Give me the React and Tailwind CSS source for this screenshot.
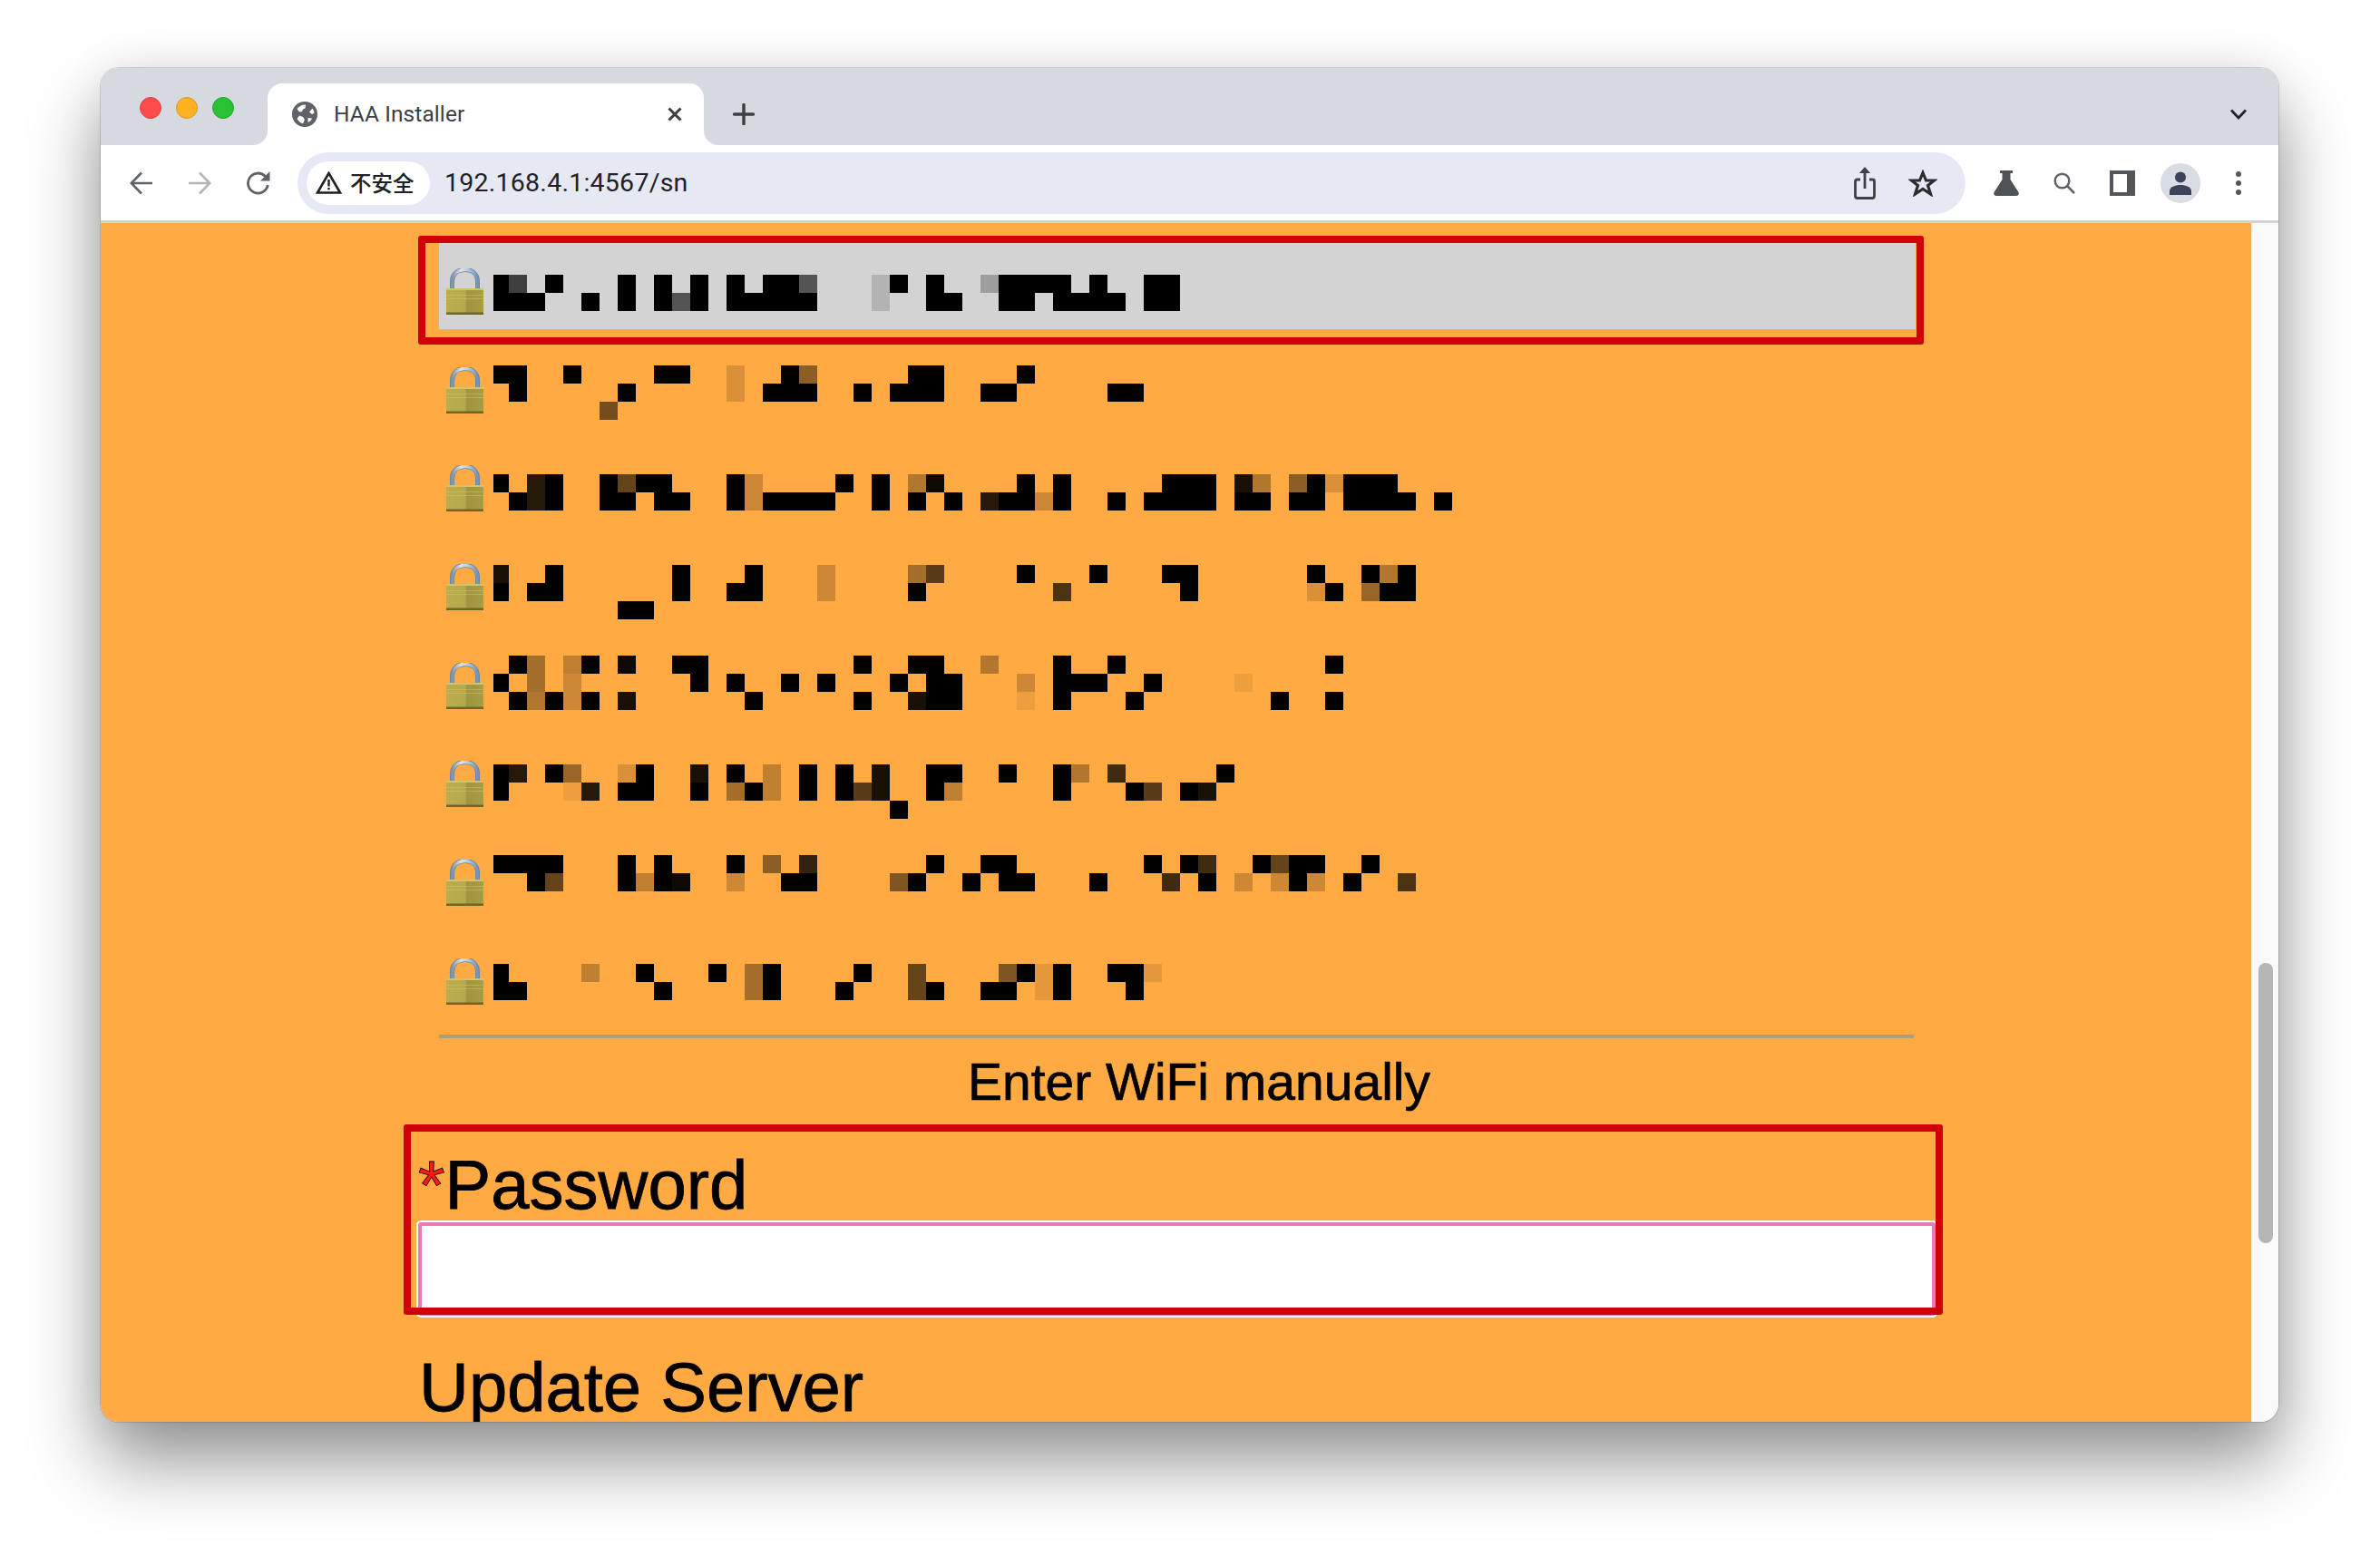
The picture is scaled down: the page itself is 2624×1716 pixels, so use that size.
const ROWS = [
    { top: 303, lines: ['0 1:.7 3 7 9 11 13 15 16 17:.6 21:.15 22 24 27:.25 28 29 30 31 33 36 37', '0 1 2 5 7 9 10:.6 11 13 14 15 16 17 21:.15 24 25 28 29 31 32 33 34 36 37'] },
    { top: 403, lines: ['0 1 4 9 10 13:.15 16 17:.45 23 24 29', '1 7 13:.15 15 16 17 20 22 23 24 27 28 34 35', '6:.55'] },
    { top: 523, lines: ['0 2:.85 3 6 7:.6 8 9 13 14:.2 19 21 23:.3 24:.95 29 31 37 38 39 41:.9 42:.3 44:.45 45 46:.15 47 48 49', '1 2:.85 3 6 7 9 10 13 14:.2 15 16 17 18 21 23 25 27:.85 28 29 30:.2 31 34 36 37 38 39 41 42 44 45 47 48 49 50 52'] },
    { top: 623, lines: ['0:.9 3 10 14 18:.2 23:.35 24:.65 29 33 37 38 45 48 49:.3 50', '0 2 3 10 13 14 18:.2 23 31:.7 38 45:.15 46 48:.4 49 50', '7 8'] },
    { top: 723, lines: ['1 2:.35 4:.25 5 7:.95 10 11 20 23 24 27:.3 31 34 46', '0 2:.35 4:.2 11 13 16 18 22 24 25 29:.2 31 32 33 36 41:.07', '1 2:.3 3 4:.2 5 7:.9 14 20 23:.9 24 25 29:.07 31 35 43 46'] },
    { top: 843, lines: ['0 1:.85 3 4:.4 7:.15 8 11:.9 13 15:.25 17 19 21:.9 24 25 28 31 32:.3 34:.75 40', '0 4:.07 5:.85 7 8 11 13:.35 14 15:.25 17 19 20:.65 21:.9 24 25:.25 31 35 36:.65 38 39:.9', '22'] },
    { top: 943, lines: ['0 1 2 3 7 9 13 15:.45 17:.8 24 27 28 36 38 39:.75 42 43:.6 44 45 48', '2 3:.6 7 8:.25 9 10:.95 13:.2 16 17 22:.5 23 26 28 29 33 37:.75 39 41:.2 43:.2 44 45:.2 47 50:.7'] },
    { top: 1063, lines: ['0 5:.25 8 12 14:.35 15 20 23:.6 28:.5 29 30:.1 31 34 35 36:.1', '0 1 9 14:.35 15 19 23:.6 24 27 28 30:.1 31 35'] },
];

// the blurred network names, one block = 20px
function Mosaic({ top, lines, rowTop }) {
    const offset = top - Math.round(rowTop);
    return (
        <svg width="1080" height="95" className="ml-[11px] shrink-0" shapeRendering="crispEdges">
            {lines.map((line, i) => line.split(' ').map(token => {
                const [col, alpha] = token.split(':');
                const x = Math.max(0, Number(col) * 20 - 3);
                const w = Number(col) === 0 ? 17 : 20;
                return <rect key={`${i}-${col}`} x={x} y={offset + i * 20} width={w} height="20" fill="#000" fillOpacity={alpha ? Number(alpha) : 1} />;
            }))}
        </svg>
    );
}

function Lock({ id }) {
    return (
        <svg width="41" height="51" viewBox="0 0 41 51" className="ml-[8px] mt-[28px] shrink-0">
            <defs>
                <linearGradient id={`body${id}`} x1="0" y1="0" x2="1" y2="0">
                    <stop offset="0" stopColor="#b9ad4f" />
                    <stop offset="0.5" stopColor="#b5a94c" />
                    <stop offset="0.56" stopColor="#9f9440" />
                    <stop offset="1" stopColor="#a89c44" />
                </linearGradient>
                <linearGradient id={`shackle${id}`} x1="0" y1="0" x2="1" y2="0">
                    <stop offset="0" stopColor="#7f93ab" />
                    <stop offset="0.35" stopColor="#dfe6ee" />
                    <stop offset="0.7" stopColor="#a9c0da" />
                    <stop offset="1" stopColor="#6f93bd" />
                </linearGradient>
            </defs>
            <path d="M6.500 23V14.500C6.500 6 12.500 1.500 20.500 1.500S34.500 6 34.500 14.500V23" fill="none" stroke="#6c7f94" strokeWidth="5" />
            <path d="M6.500 23V14.500C6.500 6 12.500 1.500 20.500 1.500S34.500 6 34.500 14.500V23" fill="none" stroke={`url(#shackle${id})`} strokeWidth="3.500" />
            <rect x="0" y="22" width="41" height="29" rx="1.500" fill={`url(#body${id})`} />
            <rect x="0" y="22" width="41" height="2" fill="#cfc56c" />
            <rect x="0" y="29" width="41" height="1" fill="#cfc56c" fillOpacity="0.5" />
            <rect x="0" y="33" width="41" height="1" fill="#cfc56c" fillOpacity="0.5" />
            <rect x="0" y="48.500" width="41" height="2.500" fill="#6f6626" />
        </svg>
    );
}

function Globe() {
    return (
        <svg width="28" height="28" viewBox="0 0 28 28" className="shrink-0">
            <circle cx="14" cy="14" r="14" fill="#5f6368" />
            <path d="M15 3.500C11.500 3.200 7.500 5 5.500 8L8 11.500L11 11L12 8.500L14.500 7.500Z" fill="#fff" />
            <path d="M22.500 7.500L19 11.500L22 14L24.500 12.500C24.300 10.800 23.500 9 22.500 7.500Z" fill="#fff" />
            <path d="M8 15.500L12 17L14 20L12 24.200C9 23.500 6.800 21.500 5.500 19Z" fill="#fff" />
            <path d="M17.500 18L22 18.500C21 20.500 19.500 22 17.500 23Z" fill="#fff" />
        </svg>
    );
}

function Toolbar() {
    return (
        <div className="flex h-[86px] shrink-0 items-center border-b-[3px] border-[#d0d2d6] bg-white pl-[32px]">
            <svg width="26" height="26" viewBox="0 0 26 26" fill="none" stroke="#5f6368" strokeWidth="2.600" className="shrink-0">
                <path d="M25 13H2M13 1.500L1.800 13L13 24.500" />
            </svg>
            <svg width="26" height="26" viewBox="0 0 26 26" fill="none" stroke="#b3b5b8" strokeWidth="2.600" className="ml-[38px] shrink-0">
                <path d="M1 13H24M13 1.500L24.200 13L13 24.500" />
            </svg>
            <svg width="27" height="27" viewBox="0 0 27 27" className="ml-[38px] shrink-0">
                <path d="M21.500 6.500A11 11 0 1 0 24.300 16" fill="none" stroke="#5f6368" strokeWidth="2.800" />
                <path d="M26.500 1V11.500H16Z" fill="#5f6368" />
            </svg>

            <div className="ml-[30px] flex h-[68px] w-[1839px] shrink-0 items-center rounded-full bg-[#e6e9f4] pl-[10px] pr-[31px]">
                <div className="flex h-[48px] w-[136px] shrink-0 items-center rounded-full bg-white pl-[10px]">
                    <svg width="29" height="25" viewBox="0 0 29 25" className="shrink-0">
                        <path d="M14.500 2L27 23.500H2Z" fill="none" stroke="#202124" strokeWidth="2.600" strokeLinejoin="miter" />
                        <path d="M13.300 9H15.700V16.500H13.300ZM13.300 18H15.700V20.300H13.300Z" fill="#202124" />
                    </svg>
                    <span className="ml-[9px] font-['Noto_Sans_CJK_SC',sans-serif] text-[23.500px] font-medium leading-none text-[#202124]">不安全</span>
                </div>
                <span className="ml-[16px] mt-[1px] font-['Roboto',sans-serif] text-[28.500px] leading-none tracking-[0.25px] text-[#202124]">192.168.4.1:4567/sn</span>

                <svg width="24" height="36" viewBox="0 0 24 36" fill="none" stroke="#3c4043" strokeWidth="2.800" className="ml-auto shrink-0">
                    <path d="M7 14H3.500A2 2 0 0 0 1.500 16V32A2.500 2.500 0 0 0 4 34.500H20A2.500 2.500 0 0 0 22.500 32V16A2 2 0 0 0 20.500 14H17" />
                    <path d="M12 24V3" />
                    <path d="M12 0L18 7H6Z" fill="#3c4043" stroke="none" />
                </svg>
                <svg width="32" height="30" viewBox="0 0 32 30" className="ml-[36px] shrink-0">
                    <path d="M16 3.500L19.500 12H28.500L21.500 17.500L24.500 27L16 21.500L7.500 27L10.500 17.500L3.500 12H12.500Z" fill="#e6e9f4" stroke="#2b2e31" strokeWidth="3.200" strokeLinejoin="miter" />
                </svg>
            </div>

            <svg width="28" height="28" viewBox="0 0 28 28" className="ml-[31px] shrink-0">
                <path d="M7 0H21V3H18.500V10L27.500 24C28.500 26 27 28 25 28H3C1 28 -.5 26 .5 24L9.500 10V3H7Z" fill="#4f5356" />
            </svg>
            <svg width="24" height="24" viewBox="0 0 24 24" fill="none" stroke="#5f6368" strokeWidth="2.500" className="ml-[38px] shrink-0">
                <circle cx="9.500" cy="9.500" r="7.800" />
                <path d="M15 15L23 23" />
            </svg>
            <div className="ml-[38px] flex h-[28px] w-[28px] shrink-0 border-[4px] border-r-[9px] border-[#53575a] bg-white" />
            <div className="ml-[28px] flex h-[44px] w-[44px] shrink-0 items-center justify-center rounded-full bg-[#d9dce3]">
                <svg width="24" height="26" viewBox="0 0 24 26">
                    <circle cx="12" cy="6.500" r="6" fill="#3c4257" />
                    <path d="M0 26V22C0 17 6 15 12 15S24 17 24 22V26Z" fill="#3c4257" />
                </svg>
            </div>
            <div className="ml-[39px] flex shrink-0 flex-col gap-[4px]">
                <div className="h-[6px] w-[6px] rounded-full bg-[#53575a]" />
                <div className="h-[6px] w-[6px] rounded-full bg-[#53575a]" />
                <div className="h-[6px] w-[6px] rounded-full bg-[#53575a]" />
            </div>
        </div>
    );
}

function TabStrip() {
    return (
        <div className="flex h-[85px] shrink-0 bg-[#d6d9e0] pl-[43px]">
            <div className="mt-[32px] flex h-[24px] shrink-0 gap-[16px]">
                <div className="h-[24px] w-[24px] rounded-full border border-[#e0413f] bg-[#ff4b4b]" />
                <div className="h-[24px] w-[24px] rounded-full border border-[#d99a1f] bg-[#ffb122]" />
                <div className="h-[24px] w-[24px] rounded-full border border-[#24a52c] bg-[#29c234]" />
            </div>
            <div className="relative ml-[37px] mt-[17px] flex h-[68px] w-[481px] shrink-0 items-center rounded-t-[16px] bg-white pl-[27px] pr-[24px]">
                <div className="absolute bottom-0 left-[-16px] h-[16px] w-[16px] bg-white">
                    <div className="h-full w-full rounded-br-[16px] bg-[#d6d9e0]" />
                </div>
                <div className="absolute bottom-0 right-[-16px] h-[16px] w-[16px] bg-white">
                    <div className="h-full w-full rounded-bl-[16px] bg-[#d6d9e0]" />
                </div>
                <Globe />
                <span className="ml-[18px] font-['Roboto',sans-serif] text-[24.500px] leading-none tracking-[0.1px] text-[#3c4043]">HAA Installer</span>
                <svg width="16" height="16" viewBox="0 0 16 16" fill="none" stroke="#3c4043" strokeWidth="3" className="ml-auto shrink-0">
                    <path d="M1.500 1.500L14.500 14.500M14.500 1.500L1.500 14.500" />
                </svg>
            </div>
            <svg width="24" height="24" viewBox="0 0 24 24" fill="none" stroke="#3c4043" strokeWidth="3.500" strokeLinecap="round" className="ml-[32px] mt-[39px] shrink-0">
                <path d="M12 1.500V22.500M1.500 12H22.500" />
            </svg>
            <svg width="18" height="12" viewBox="0 0 18 12" fill="none" stroke="#202124" strokeWidth="2.800" className="ml-auto mr-[35px] mt-[45px] shrink-0">
                <path d="M1 1.500L9 10L17 1.500" />
            </svg>
        </div>
    );
}

function WifiList() {
    return (
        <div className="flex flex-col pl-[39px] pt-[22px]">
            {ROWS.map((row, i) => {
                const rowTop = 268 + i * 108.67;
                return (
                    <div key={row.top} className={`relative mb-[13.670px] flex h-[95px] w-[1628px] ${i === 0 ? 'bg-[#d3d3d3]' : ''}`}>
                        <Lock id={i} />
                        <Mosaic top={row.top} lines={row.lines} rowTop={rowTop} />
                        {i === 0 && (
                            <div className="pointer-events-none absolute bottom-[-17px] left-[-23px] right-[-9px] top-[-8px] rounded-[3px] border-[8px] border-[#cf0008]" />
                        )}
                    </div>
                );
            })}
            <div className="mt-[4px] h-[4px] w-[1626px] bg-[#a99f7e]" />
        </div>
    );
}

export default function App() {
    return (
        <div className="flex h-[1716px] w-[2624px] overflow-hidden bg-white pl-[111px] pt-[75px] font-['Liberation_Sans',Arial,sans-serif]">
            <div className="flex h-[1493px] w-[2401px] flex-col overflow-hidden rounded-[20px] shadow-[0_0_0_1px_rgba(0,0,0,0.14),0_44px_80px_rgba(0,0,0,0.42),0_0_50px_rgba(0,0,0,0.08)]">
                <TabStrip />
                <Toolbar />
                <div className="flex min-h-0 flex-1">
                    <main className="min-w-0 flex-1 overflow-hidden bg-[#ffaa42]">
                        <div className="ml-[334px] w-[1697px]">
                            <WifiList />
                            <div className="ml-[57px] mt-[16px] text-center text-[57px] leading-[65px] text-black [-webkit-text-stroke:0.7px_black]">Enter WiFi manually</div>

                            <div className="relative mt-[14px] pl-[16px] pt-[25px]">
                                <label className="block text-[76px] leading-[83px] text-black [-webkit-text-stroke:0.8px_black]">
                                    <span className="text-[#ff1a1a]">*</span>Password
                                </label>
                                <input type="password" className="block h-[103px] w-[1673px] rounded-[3px] border-[4px] border-[#e97cb0] bg-white outline-2 outline-white" />
                                <div className="pointer-events-none absolute inset-x-0 bottom-[1px] top-0 rounded-[3px] border-[8px] border-[#cf0008]" />
                            </div>

                            <div className="ml-[17px] mt-[37px] text-[76px] leading-[84px] text-black [-webkit-text-stroke:0.8px_black]">Update Server</div>
                        </div>
                    </main>
                    <div className="w-[30px] shrink-0 border-l border-[#ffe9cf] bg-[#f9f9f9] pl-[7px] pt-[816px]">
                        <div className="h-[309px] w-[16px] rounded-full bg-[#b5b5b5]" />
                    </div>
                </div>
            </div>
        </div>
    );
}
